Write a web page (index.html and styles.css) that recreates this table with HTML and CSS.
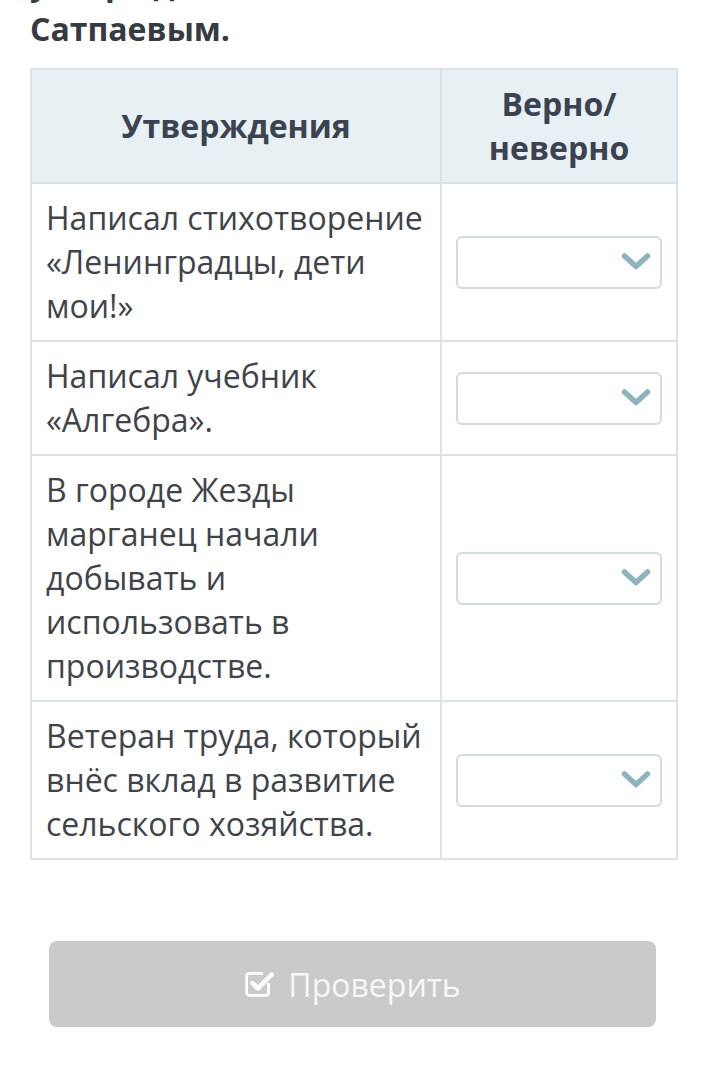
FILE: index.html
```html
<!DOCTYPE html>
<html lang="ru">
<head>
<meta charset="utf-8">
<link rel="stylesheet" href="styles.css">
</head>
<body>
<main class="page">
  <h2 class="task">Определи, верны ли<br>утверждения, связанные с Канышем<br>Сатпаевым.</h2>
  <table class="grid">
    <colgroup><col class="c1"><col class="c2"></colgroup>
    <thead>
      <tr><th>Утверждения</th><th>Верно/<br>неверно</th></tr>
    </thead>
    <tbody>
      <tr><td>Написал стихотворение «Ленинградцы, дети мои!»</td><td class="sel-cell"><div class="select"><svg class="chev" viewBox="0 0 30 20" width="30" height="20"><path d="M3.5 4 L15 14.5 L26.5 4" fill="none" stroke="#8fb3bd" stroke-width="5.5" stroke-linecap="round" stroke-linejoin="round"/></svg></div></td></tr>
      <tr><td>Написал учебник «Алгебра».</td><td class="sel-cell"><div class="select"><svg class="chev" viewBox="0 0 30 20" width="30" height="20"><path d="M3.5 4 L15 14.5 L26.5 4" fill="none" stroke="#8fb3bd" stroke-width="5.5" stroke-linecap="round" stroke-linejoin="round"/></svg></div></td></tr>
      <tr><td>В городе Жезды марганец начали добывать и использовать в производстве.</td><td class="sel-cell"><div class="select"><svg class="chev" viewBox="0 0 30 20" width="30" height="20"><path d="M3.5 4 L15 14.5 L26.5 4" fill="none" stroke="#8fb3bd" stroke-width="5.5" stroke-linecap="round" stroke-linejoin="round"/></svg></div></td></tr>
      <tr><td>Ветеран труда, который внёс вклад в развитие сельского хозяйства.</td><td class="sel-cell"><div class="select"><svg class="chev" viewBox="0 0 30 20" width="30" height="20"><path d="M3.5 4 L15 14.5 L26.5 4" fill="none" stroke="#8fb3bd" stroke-width="5.5" stroke-linecap="round" stroke-linejoin="round"/></svg></div></td></tr>
    </tbody>
  </table>
  <div class="actions">
    <button class="check-btn" type="button"><svg class="chk" viewBox="0 0 30 30" width="32" height="32"><path d="M23 16 V25 a2.5 2.5 0 0 1 -2.5 2.5 H5 a2.5 2.5 0 0 1 -2.5 -2.5 V9.5 a2.5 2.5 0 0 1 2.5 -2.5 H18" fill="none" stroke="#fff" stroke-width="2.6" stroke-linejoin="round"/><path d="M8 16 L13 21 L26 8" fill="none" stroke="#fff" stroke-width="4.2" stroke-linecap="round" stroke-linejoin="round"/></svg><span>Проверить</span></button>
  </div>
</main>
</body>
</html>
```
FILE: styles.css
```css
html, body {
  margin: 0;
  padding: 0;
  background: #ffffff;
}
body {
  font-family: "Open Sans", "Noto Sans", sans-serif;
  color: #3c4045;
  overflow: hidden;
  height: 1082px;
}
.page {
  padding: 0 28px 0 30px;
}
.task {
  margin: -86px 0 16px 0;
  font-size: 32px;
  line-height: 46px;
  font-weight: 700;
  color: #363b42;
}
.grid {
  width: 646px;
  border-collapse: collapse;
  table-layout: fixed;
}
.c1 { width: 410px; }
.c2 { width: 236px; }
.grid th, .grid td {
  border: 2px solid #dbe3e6;
  padding: 12px 14px;
  font-size: 32px;
  line-height: 44px;
  text-align: left;
  vertical-align: middle;
}
.grid th {
  background: #e9f0f4;
  font-weight: 700;
  color: #3b4350;
  text-align: center;
}
.grid td {
  color: #40444a;
}
.select {
  height: 49px;
  border: 2px solid #d2dcde;
  border-radius: 6px;
  background: #fff;
  display: flex;
  align-items: center;
  justify-content: flex-end;
  padding-right: 9px;
}
.chev {
  display: block;
}
.actions {
  padding: 81px 20px 0 19px;
}
.check-btn {
  width: 100%;
  height: 86px;
  border: none;
  border-radius: 8px;
  background: #cacaca;
  color: #f7f7f7;
  font-family: "Open Sans", "Noto Sans", sans-serif;
  font-size: 32px;
  display: flex;
  align-items: center;
  justify-content: center;
  gap: 12px;
  padding: 0;
}
.chk {
  display: block;
  margin-top: -4px;
}
```
